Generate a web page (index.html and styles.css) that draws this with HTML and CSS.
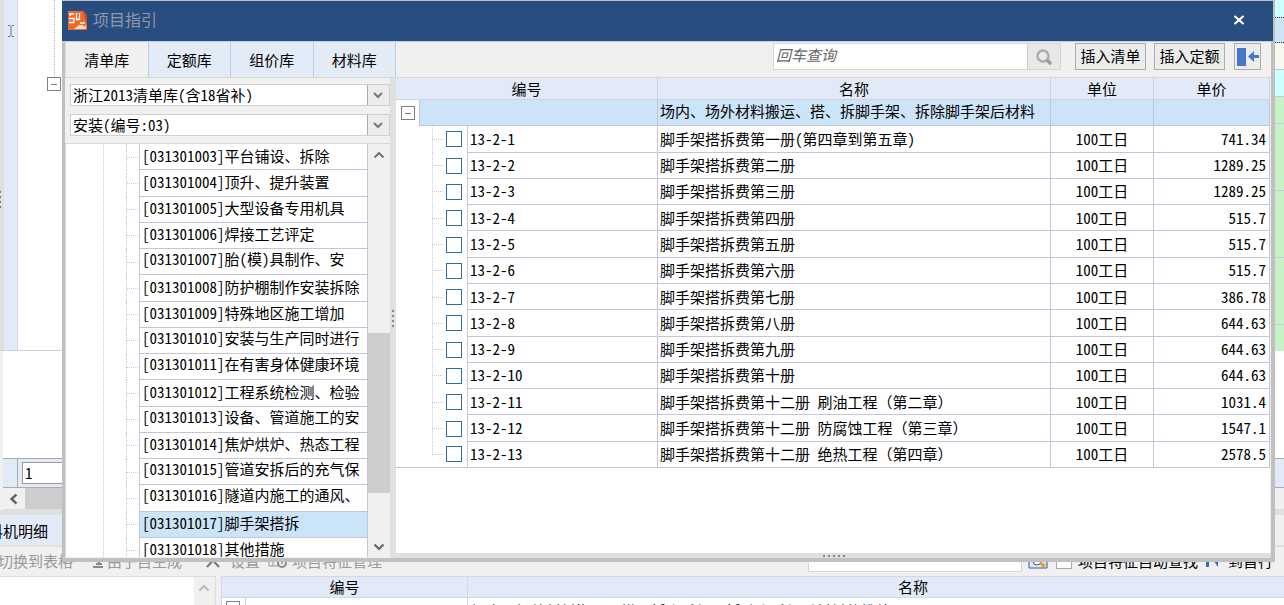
FILE: index.html
```html
<!DOCTYPE html>
<html lang="zh-CN">
<head>
<meta charset="utf-8">
<title>项目指引</title>
<link rel="stylesheet" href="styles.css">
</head>
<body>
<main class="app">
  <section class="sheet">
    <div class="sheet-edge"><i></i><i></i><i></i><i></i></div>
    <div class="sheet-marker">
      <svg width="8" height="14" viewBox="0 0 8 14"><path d="M1 1.5h2l1 1 1-1h2M4 2.5v9M1 12.5h2l1-1 1 1h2" fill="none" stroke="#777"/></svg>
    </div>
    <div class="sheet-tree"><span class="sheet-line"></span><span class="toggle"></span></div>
    <div class="sheet-cells">
      <span class="cell cyan"></span><span class="cell blue"></span><span class="cell cream"></span><span class="cell cyan"></span><span class="cell green"></span><span class="cell green tall"></span><span class="cell green tall"></span><span class="cell green tall"></span><span class="cell green"></span>
    </div>
  </section>
  <section class="blank"></section>
  <section class="entry"><span class="entry-marker"></span><input class="entry-input" aria-label="行号" value="1"></section>
  <section class="hscroll">
    <button class="hscroll-btn" aria-label="向左滚动"><svg width="10" height="12" viewBox="0 0 10 12"><path d="M7.5 1.5L2.500 6l5 4.500" fill="none" stroke="#666" stroke-width="2.400"/></svg></button>
    <span class="hscroll-thumb"></span><span class="hscroll-track"></span>
  </section>
  <nav class="detail-tabs"><button class="detail-tab">工料机明细</button></nav>
  <section class="detail-tools">
    <button class="tool">切换到表格</button>
    <button class="tool"><svg width="10" height="14" viewBox="0 0 10 14"><path d="M0 13h10M3 10h6M6 3v7" stroke="#888" stroke-width="2" fill="none"/></svg>由子目生成</button>
    <span class="tool-pair">
      <button class="tool"><svg width="24" height="14" viewBox="0 0 24 14"><path d="M5 13L15 2M7 2l10 11" stroke="#777" stroke-width="2" fill="none"/></svg>设置</button>
      <button class="tool"><svg width="20" height="16" viewBox="0 0 20 16"><path d="M1 3h9v10H1zM1 8h9M5 3v10" stroke="#999" fill="none"/><circle cx="14" cy="10" r="4" fill="#eee" stroke="#888" stroke-width="2"/><circle cx="14" cy="10" r="1" fill="#888"/></svg>项目特征管理</button>
    </span>
    <span class="tools-right">
      <input class="find-input" aria-label="查找">
      <svg width="20" height="18" viewBox="0 0 20 18"><path d="M1 2h18v14H1z" fill="#dce8f4" stroke="#345f92"/><circle cx="9" cy="9" r="4" fill="#fff" stroke="#456"/><path d="M11 11l4 5 3-3-5-3z" fill="#e39a3c"/></svg>
      <label class="auto"><input type="checkbox" class="auto-box">项目特征自动查找</label>
      <button class="tool dark"><svg width="12" height="14" viewBox="0 0 12 14"><path d="M0 1h3v12H0zM5 3l7 2v8z" fill="#3567cc"/></svg>到首行</button>
    </span>
  </section>
  <section class="detail">
    <div class="detail-list"><span class="detail-scroll"><svg width="12" height="8" viewBox="0 0 12 8"><path d="M1.500 6.500L6 2l4.500 4.500" fill="none" stroke="#bbb" stroke-width="2"/></svg></span></div>
    <table class="detail-table">
      <colgroup><col class="d-tree"><col class="d-code"><col></colgroup>
      <thead><tr><th colspan="2">编号</th><th class="d-name">名称</th></tr></thead>
      <tbody><tr><td class="d-toggle"><span class="toggle"></span></td><td></td><td>场内、场外材料搬运、搭、拆脚手架、拆除脚手架后材料的堆放</td></tr></tbody>
    </table>
  </section>
</main>

<div class="dialog" role="dialog" aria-labelledby="dlg-title">
  <header class="title">
    <svg class="logo" width="21" height="21" viewBox="0 0 21 21"><path d="M1 1h15l4 4v15H1z" fill="#ea692b"/><path d="M16 1l4 4v9z" fill="#c84c12"/><path d="M2 4h5M2 8.500h5v4H2M9.500 3v6M3.500 4v2M9 9.500h4M12.500 3v7M13 13h5" fill="none" stroke="#fff" stroke-width="1.300"/><path d="M7 19l5-4h4l1 2 2-2v4z" fill="#f8d9b8"/></svg>
    <h1 id="dlg-title">项目指引</h1>
    <button class="close" aria-label="关闭"><svg width="12" height="10" viewBox="0 0 12 10"><path d="M1.500 1l9 8M10.500 1l-9 8" stroke="#fff" stroke-width="2.200"/></svg></button>
  </header>
  <div class="bar">
    <nav class="tabs"><button class="tab active">清单库</button><button class="tab">定额库</button><button class="tab">组价库</button><button class="tab">材料库</button></nav>
    <div class="tools">
      <div class="search"><input class="search-input" placeholder="回车查询" aria-label="回车查询"><button class="search-btn" aria-label="查询"><svg width="18" height="18" viewBox="0 0 18 18"><circle cx="8" cy="8" r="5.500" fill="none" stroke="#aaa" stroke-width="2.400"/><path d="M12 12l4 4" stroke="#999" stroke-width="3.400"/></svg></button></div>
      <button class="btn">插入清单</button>
      <button class="btn">插入定额</button>
      <button class="btn icon" aria-label="停靠"><svg width="22" height="18" viewBox="0 0 22 18"><path d="M0 0h9v18H0zM11 8.500l6-5.500v4h5v3h-5v4z" fill="#4877c8"/></svg></button>
    </div>
  </div>
  <div class="body">
    <aside class="side">
      <div class="combos">
        <select class="combo" aria-label="清单库"><option>浙江2013清单库(含18省补)</option></select>
        <select class="combo" aria-label="专业"><option>安装(编号:03)</option></select>
      </div>
      <div class="tree">
        <ul class="nodes">
          <li><span>[031301003]平台铺设、拆除</span></li>
          <li><span>[031301004]顶升、提升装置</span></li>
          <li><span>[031301005]大型设备专用机具</span></li>
          <li><span>[031301006]焊接工艺评定</span></li>
          <li class="cut"><span>[031301007]胎(模)具制作、安</span></li>
          <li><span>[031301008]防护棚制作安装拆除</span></li>
          <li><span>[031301009]特殊地区施工增加</span></li>
          <li class="cut"><span>[031301010]安装与生产同时进行</span></li>
          <li class="cut"><span>[031301011]在有害身体健康环境</span></li>
          <li><span>[031301012]工程系统检测、检验</span></li>
          <li class="cut"><span>[031301013]设备、管道施工的安</span></li>
          <li><span>[031301014]焦炉烘炉、热态工程</span></li>
          <li class="cut"><span>[031301015]管道安拆后的充气保</span></li>
          <li class="cut"><span>[031301016]隧道内施工的通风、</span></li>
          <li class="selected"><span>[031301017]脚手架搭拆</span></li>
          <li><span>[031301018]其他措施</span></li>
        </ul>
        <div class="vscroll">
          <svg width="12" height="8" viewBox="0 0 12 8"><path d="M1.500 6.500L6 2l4.500 4.500" fill="none" stroke="#777" stroke-width="2.200"/></svg>
          <span class="thumb"></span>
          <svg width="12" height="8" viewBox="0 0 12 8"><path d="M1.500 1.500L6 6l4.500-4.500" fill="none" stroke="#666" stroke-width="2.200"/></svg>
        </div>
      </div>
    </aside>
    <div class="split"><i></i><i></i><i></i><i></i></div>
    <section class="main">
      <div class="grid-wrap">
      <table class="grid">
        <colgroup><col class="c-toggle"><col class="c-check"><col class="c-code"><col><col class="c-unit"><col class="c-price"></colgroup>
        <thead><tr><th colspan="3">编号</th><th>名称</th><th>单位</th><th>单价</th></tr></thead>
        <tbody>
          <tr class="group"><td class="g-toggle"><span class="toggle"></span></td><td colspan="2"></td><td class="g-name">场内、场外材料搬运、搭、拆脚手架、拆除脚手架后材料</td><td></td><td></td></tr>
          <tr><td class="pick" colspan="2"><input type="checkbox" aria-label="13-2-1"></td><td>13-2-1</td><td>脚手架搭拆费第一册(第四章到第五章)</td><td class="unit">100工日</td><td class="price">741.34</td></tr>
          <tr><td class="pick" colspan="2"><input type="checkbox" aria-label="13-2-2"></td><td>13-2-2</td><td>脚手架搭拆费第二册</td><td class="unit">100工日</td><td class="price">1289.25</td></tr>
          <tr><td class="pick" colspan="2"><input type="checkbox" aria-label="13-2-3"></td><td>13-2-3</td><td>脚手架搭拆费第三册</td><td class="unit">100工日</td><td class="price">1289.25</td></tr>
          <tr><td class="pick" colspan="2"><input type="checkbox" aria-label="13-2-4"></td><td>13-2-4</td><td>脚手架搭拆费第四册</td><td class="unit">100工日</td><td class="price">515.7</td></tr>
          <tr><td class="pick" colspan="2"><input type="checkbox" aria-label="13-2-5"></td><td>13-2-5</td><td>脚手架搭拆费第五册</td><td class="unit">100工日</td><td class="price">515.7</td></tr>
          <tr><td class="pick" colspan="2"><input type="checkbox" aria-label="13-2-6"></td><td>13-2-6</td><td>脚手架搭拆费第六册</td><td class="unit">100工日</td><td class="price">515.7</td></tr>
          <tr><td class="pick" colspan="2"><input type="checkbox" aria-label="13-2-7"></td><td>13-2-7</td><td>脚手架搭拆费第七册</td><td class="unit">100工日</td><td class="price">386.78</td></tr>
          <tr><td class="pick" colspan="2"><input type="checkbox" aria-label="13-2-8"></td><td>13-2-8</td><td>脚手架搭拆费第八册</td><td class="unit">100工日</td><td class="price">644.63</td></tr>
          <tr><td class="pick" colspan="2"><input type="checkbox" aria-label="13-2-9"></td><td>13-2-9</td><td>脚手架搭拆费第九册</td><td class="unit">100工日</td><td class="price">644.63</td></tr>
          <tr><td class="pick" colspan="2"><input type="checkbox" aria-label="13-2-10"></td><td>13-2-10</td><td>脚手架搭拆费第十册</td><td class="unit">100工日</td><td class="price">644.63</td></tr>
          <tr><td class="pick" colspan="2"><input type="checkbox" aria-label="13-2-11"></td><td>13-2-11</td><td>脚手架搭拆费第十二册 刷油工程<span class="full">（第二章）</span></td><td class="unit">100工日</td><td class="price">1031.4</td></tr>
          <tr><td class="pick" colspan="2"><input type="checkbox" aria-label="13-2-12"></td><td>13-2-12</td><td>脚手架搭拆费第十二册 防腐蚀工程<span class="full">（第三章）</span></td><td class="unit">100工日</td><td class="price">1547.1</td></tr>
          <tr class="last"><td class="pick" colspan="2"><input type="checkbox" aria-label="13-2-13"></td><td>13-2-13</td><td>脚手架搭拆费第十二册 绝热工程<span class="full">（第四章）</span></td><td class="unit">100工日</td><td class="price">2578.5</td></tr>
        </tbody>
      </table>
      </div>
      <div class="grip"><i></i><i></i><i></i><i></i><i></i></div>
    </section>
  </div>
</div>
</body>
</html>
```
FILE: styles.css
```css
* { box-sizing: border-box; }
html, body { height: 100%; margin: 0; }
body {
  position: relative;
  overflow: hidden;
  background: #f0f0f0;
  color: #000;
  font: 15px/20px "Noto Sans CJK SC", sans-serif;
  font-feature-settings: "hwid";
}
button, input, select {
  margin: 0;
  padding: 0;
  border: 0;
  border-radius: 0;
  color: inherit;
  font: inherit;
  font-feature-settings: inherit;
  background: none;
}
svg { display: block; flex: none; }
input[type="checkbox"] { appearance: none; }
table { border-collapse: separate; border-spacing: 0; }
th { font-weight: 400; }
td, th { padding: 0; white-space: nowrap; }
.full { font-feature-settings: normal; }

.toggle {
  display: block;
  width: 14px;
  height: 14px;
  border: 1px solid #808080;
  background: linear-gradient(#808080, #808080) center / 6px 1px no-repeat #fff;
}

/* Main window behind the dialog */
.app { display: flex; flex-direction: column; height: 100%; overflow: hidden; }
.sheet { display: flex; height: 351px; flex: none; border-bottom: 1px solid #cfcfe4; background: #fff; }
.sheet-edge {
  display: flex;
  flex-direction: column;
  justify-content: center;
  gap: 3px;
  width: 4px;
  padding-top: 48px;
  background: #e0e0e0;
}
.sheet-edge i { width: 1px; height: 2px; background: #777; }
.sheet-marker { display: flex; justify-content: center; width: 14px; padding-top: 24px; background: #e3eaf7; border-right: 1px solid #cfd8ea; }
.sheet-tree { width: 44px; padding-left: 29px; }
.sheet-line { display: block; width: 1px; height: 77px; margin-left: 7px; border-left: 1px dotted #b0b0c8; }
.sheet-cells { width: 12px; margin-left: auto; }
.cell { display: block; height: 27px; border-bottom: 1px solid #c6c8d8; }
.cyan { background: #ccffff; }
.blue { background: #cce4f6; height: 25px; }
.cell.cyan:first-child { height: 18px; }
.cell.cyan:first-child, .blue { border-bottom: 1px dotted #333; }
.cream { background: #f8f8f0; }
.green { background: #c6f2c6; }
.tall { height: 67px; }
.blank { height: 107px; flex: none; margin-left: 3px; background: #fff; }
.entry { display: flex; height: 30px; flex: none; margin-left: 3px; border: solid #aaaab0; border-width: 1px 0; background: #e3eaf7; }
.entry-marker { width: 15px; border-right: 1px solid #aaaab0; }
.entry-input { width: 100px; height: 22px; margin: 3px 4px; padding: 0 2px 2px; border: 1px solid #999; background: #fff; }
.hscroll { display: flex; height: 22px; flex: none; margin-left: 3px; border-bottom: 1px solid #ddd; }
.hscroll-btn { display: flex; align-items: center; justify-content: center; width: 22px; }
.hscroll-thumb { flex: 1; background: #cdcdcd; }
.hscroll-track { width: 200px; }
.detail-tabs { height: 37px; flex: none; padding-top: 5px; border-bottom: 2px solid #e0e0e0; overflow: hidden; background: linear-gradient(#e0e0e0 5px, #f0f0f0 5px); }
.detail-tab { display: block; width: 110px; height: 30px; margin-left: -27px; padding: 2px 0 0; text-align: left; background: #e3eaf7; }
.detail-tools { display: flex; align-items: center; gap: 20px; height: 29px; flex: none; margin-left: -2px; padding-bottom: 2px; color: #999; }
.tool { display: flex; align-items: center; gap: 4px; height: 22px; white-space: nowrap; }
.tool-pair { display: flex; gap: 8px; }
.tools-right { display: flex; align-items: center; gap: 6px; margin-left: auto; padding-right: 11px; }
.find-input { width: 214px; height: 22px; border: 1px solid #d5d5d5; background: #fff; }
.auto { display: flex; align-items: center; gap: 6px; padding: 0 2px; color: #000; }
.auto-box { width: 16px; height: 16px; border: 1px solid #aaa; background: #fff; }
.dark { color: #000; gap: 10px; }
.detail { display: flex; flex: 1; gap: 5px; overflow: hidden; }
.detail-list { display: flex; justify-content: flex-end; width: 216px; flex: none; border: solid #dcdcdc; border-width: 1px 1px 0 0; background: #fff; }
.detail-scroll { width: 21px; padding: 7px 4px; background: #f0f0f0; }
.detail-table { flex: 1; width: 100%; table-layout: fixed; background: #fff; }
.detail-table th { height: 22px; border: 1px solid #d5d5ec; border-right: 0; line-height: 18px; background: #e3eaf7; }
.d-tree { width: 24px; }
.d-code { width: 222px; }
.detail-table .d-name { padding-left: 74px; }
.detail-table td { padding: 3px 3px 0; vertical-align: top; border-left: 1px solid #cfcfe4; }
.detail-table .d-toggle { padding-left: 4px; }

/* Dialog */
.dialog {
  position: absolute;
  inset: 0 9px 43px 62px;
  display: flex;
  flex-direction: column;
  border: solid #c0c0c0;
  border-width: 1px 4px 4px 3px;
  background: #f0f0f0;
}
.title { display: flex; align-items: center; height: 41px; flex: none; margin: 0 -2px 0 -3px; padding: 0 27px 2px 5px; border-bottom: 1px solid #bdd0e8; background: #284d80; }
.title h1 { flex: 1; margin: 0; padding: 0 0 2px 5px; font-size: 16px; font-weight: 400; color: #8f99a8; }
.close { display: flex; align-items: center; justify-content: center; width: 14px; height: 20px; }
.bar { display: flex; height: 36px; flex: none; border-bottom: 1px solid #d8d8d8; }
.tabs { display: flex; width: 331px; flex: none; border-right: 1px solid #b5cfe8; }
.tab { flex: 1; border-left: 1px solid #b5cfe8; background: #e3ebf7; }
.tab.active { border-color: #e0e0e0; background: #f0f0f0; }
.tools { display: flex; flex: 1; justify-content: flex-end; gap: 8px; padding: 1px 10px 7px 0; }
.search { display: flex; width: 288px; margin-right: 6px; border: 1px solid #d5d5d5; }
.search-input { flex: 1; min-width: 0; padding: 0 2px 4px; background: #fff; font-style: italic; }
.search-input::placeholder { color: #666; opacity: 1; }
.search-btn { display: flex; align-items: center; justify-content: center; width: 33px; border-left: 1px solid #ccc; background: #e8e8e8; }
.btn { width: 71px; padding-bottom: 2px; border: 1px solid #adadad; background: #ececec; }
.btn.icon { display: flex; align-items: center; justify-content: center; width: 27px; margin-left: 1px; padding: 0; }

.body { display: flex; flex: 1; min-height: 0; }
.side { display: flex; flex-direction: column; width: 325px; flex: none; }
.combos { display: flex; flex-direction: column; gap: 8px; padding: 6px 0 7px 5px; }
.combo {
  appearance: none;
  width: 100%;
  height: 22px;
  padding: 0 24px 2px 2px;
  border: 1px solid #d0d0d0;
  line-height: 20px;
  background:
    url("data:image/svg+xml,%3Csvg xmlns='http://www.w3.org/2000/svg' width='22' height='20'%3E%3Cpath d='M0 0h22v20H0z' fill='%23ececec'/%3E%3Cpath d='M.5 0v20' stroke='%23aaa'/%3E%3Cpath d='M7 8l4 4 4-4' fill='none' stroke='%23777' stroke-width='2'/%3E%3C/svg%3E") right center no-repeat #fff;
}
.tree { display: flex; flex: 1; min-height: 0; margin-bottom: 1px; border: 1px solid #d8d8d8; border-width: 1px 0 0 1px; overflow: hidden; background: #fff; }
.nodes {
  display: grid;
  grid-template-rows: repeat(16, 1fr);
  flex: 1;
  height: 420px;
  margin: 0;
  padding: 0;
  list-style: none;
  background: repeating-linear-gradient(#c8c8dc 0 1px, transparent 1px 2px) 37px 0 / 1px 100% no-repeat;
}
.nodes li { display: flex; padding-left: 12px; margin-left: 60px; white-space: nowrap; background: linear-gradient(90deg, #c8c8dc 50%, transparent 50%) 0 center / 2px 1px repeat-x; border-left: 1px dotted #c0c0d8; }
.nodes span { display: flex; flex: 1; align-items: center; padding: 0 0 2px 2px; border: solid #c4c4dc; border-width: 0 1px 1px; background: #fff; }
.nodes .cut span { padding-bottom: 5px; }
.nodes .selected span { background: #cce4f7; }
.vscroll { display: flex; flex-direction: column; align-items: center; width: 22px; padding: 7px 0 6px; background: #f0f0f0; }
.thumb { flex: none; width: 100%; height: 160px; margin: auto 0 50px; background: #cdcdcd; }
.split { display: flex; flex-direction: column; align-items: center; justify-content: center; gap: 3px; width: 6px; flex: none; background: #e0e0e0; }
.split i, .grip i { width: 2px; height: 2px; background: #888; }
.main { display: flex; flex: 1; flex-direction: column; min-width: 0; }
.grid-wrap { flex: 1; min-height: 0; margin-right: 1px; background: #fff; }
.grid { width: 100%; height: 390px; table-layout: fixed; }
.c-toggle { width: 24px; }
.c-check { width: 48px; }
.c-code { width: 190px; }
.c-unit { width: 103px; }
.c-price { width: 116px; }
.grid th { height: 22px; border: solid #cfcfe6; border-width: 0 1px 1px 0; line-height: 18px; background: #e3eaf7; }
.grid td { padding-left: 2px; border: solid #c4c4dc; border-width: 0 1px 1px 0; }
.grid .group td { background: #cce4f7; }
.grid .group .g-name { padding-bottom: 4px; line-height: 16px; }
.grid .group .g-toggle { padding-left: 5px; border-bottom: 0; background: #fff; }
.grid .pick {
  padding-left: 50px;
  border-bottom: 0;
  background-image: repeating-linear-gradient(90deg, #c8c8dc 0 1px, transparent 1px 2px), repeating-linear-gradient(#c8c8dc 0 1px, transparent 1px 2px);
  background-position: 36px center, 36px 0;
  background-repeat: no-repeat;
  background-size: 12px 1px, 1px 100%;
}
.grid .last .pick { border-bottom: 1px solid #c4c4dc; background-size: 12px 1px, 1px 50%; }
.pick input { display: block; width: 16px; height: 16px; border: 1px solid #2f6c9f; background: #fff; }
.grid .unit { padding: 0; text-align: center; }
.grid .price { padding-right: 3px; text-align: right; }
.grip { display: flex; align-items: center; justify-content: center; gap: 3px; height: 5px; flex: none; background: #e0e0e0; }
```
